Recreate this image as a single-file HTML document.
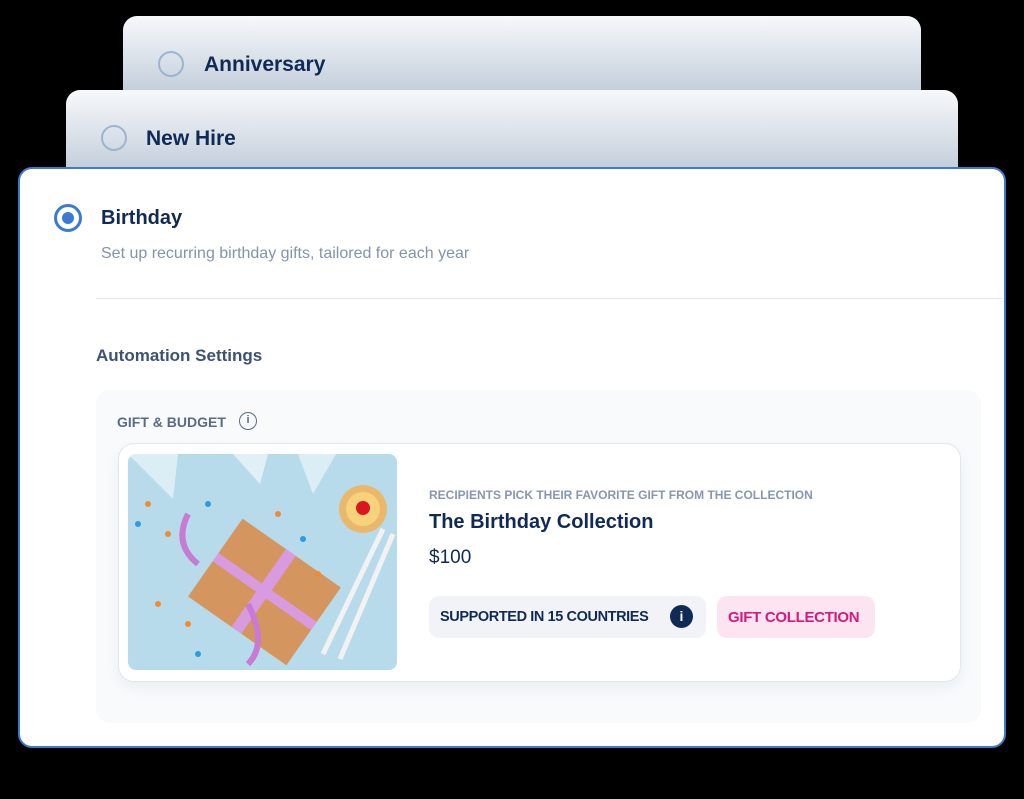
<!DOCTYPE html>
<html><head><meta charset="utf-8"><style>
*{margin:0;padding:0;box-sizing:border-box}
body{width:1024px;height:799px;background:#000;position:relative;overflow:hidden;font-family:"Liberation Sans",sans-serif;color:#0f2a55}
.card{position:absolute;border-radius:14px 14px 0 0;background:linear-gradient(#f7f9fb,#c3cedb)}
.radio{position:absolute;width:26px;height:26px;border-radius:50%;border:2px solid #9db4d1}
.lbl{position:absolute;font-size:21px;font-weight:700;color:#0f2a55}
.abs{position:absolute;white-space:nowrap}
</style></head><body>
<div class="card" style="left:123px;top:16px;width:798px;height:76px"></div>
<div class="radio" style="left:158px;top:51px"></div>
<div class="lbl" style="left:204px;top:53px">Anniversary</div>
<div class="card" style="left:66px;top:90px;width:892px;height:80px"></div>
<div class="radio" style="left:101px;top:125px"></div>
<div class="lbl" style="left:146px;top:127px">New Hire</div>
<div style="position:absolute;left:18px;top:167px;width:988px;height:581px;background:#fff;border:2px solid #3b7ad1;border-radius:14px"></div>
<div style="position:absolute;left:54px;top:204px;width:28px;height:28px;border-radius:50%;border:3px solid #3b7ad1"></div>
<div style="position:absolute;left:62px;top:212px;width:12px;height:12px;border-radius:50%;background:#3b7ad1"></div>
<div class="abs" style="left:101px;top:207px;font-size:20px;font-weight:700">Birthday</div>
<div class="abs" style="left:101px;top:245px;font-size:16px;color:#8393aa">Set up recurring birthday gifts, tailored for each year</div>
<div style="position:absolute;left:96px;top:298px;width:907px;height:1px;background:#e3e8ee"></div>
<div class="abs" style="left:96px;top:346px;font-size:17px;font-weight:700;color:#3d5273">Automation Settings</div>
<div style="position:absolute;left:96px;top:390px;width:885px;height:333px;background:#f8fafc;border-radius:14px"></div>
<div class="abs" style="left:117px;top:414px;font-size:14px;font-weight:700;color:#5a6c85">GIFT &amp; BUDGET</div>
<div style="position:absolute;left:239px;top:412px;width:18px;height:18px;border-radius:50%;border:1.5px solid #5a6c85;font-size:11px;font-weight:700;color:#5a6c85;text-align:center;line-height:15px">i</div>
<div style="position:absolute;left:118px;top:443px;width:843px;height:239px;background:#fff;border:1px solid #e1e7ef;border-radius:16px;box-shadow:0 6px 14px rgba(30,60,100,0.06)"></div>
<div style="position:absolute;left:128px;top:454px;width:269px;height:216px;border-radius:8px;overflow:hidden;background:#b8dbeb">
<svg width="269" height="216">
<polygon points="0,0 50,0 45,45" fill="#dceef5"/><polygon points="105,0 140,0 132,30" fill="#e0f0f6"/><polygon points="170,0 208,0 185,40" fill="#dceef5"/>
<circle cx="235" cy="55" r="24" fill="#e9b86a"/><circle cx="235" cy="55" r="17" fill="#f7d27c"/><circle cx="235" cy="54" r="7" fill="#d8181e"/>
<g transform="rotate(35 135 140)"><rect x="75" y="90" width="120" height="95" fill="#d4955e"/><rect x="128" y="90" width="12" height="95" fill="#d99be0"/><rect x="75" y="132" width="120" height="10" fill="#d99be0"/></g>
<path d="M60 60 Q45 90 70 110 M120 150 Q140 190 120 210" stroke="#c77bd1" stroke-width="6" fill="none"/>
<path d="M195 200 L255 75 M212 205 L265 80" stroke="#f2f2f2" stroke-width="5"/>
<g fill="#f28a2e"><circle cx="20" cy="50" r="3"/><circle cx="40" cy="80" r="3"/><circle cx="150" cy="60" r="3"/><circle cx="190" cy="120" r="3"/><circle cx="30" cy="150" r="3"/><circle cx="60" cy="170" r="3"/></g>
<g fill="#2c9be0"><circle cx="10" cy="70" r="3"/><circle cx="80" cy="50" r="3"/><circle cx="175" cy="85" r="3"/><circle cx="70" cy="200" r="3"/></g>
</svg></div>
<div class="abs" style="left:429px;top:488px;font-size:12px;font-weight:700;color:#8797ad">RECIPIENTS PICK THEIR FAVORITE GIFT FROM THE COLLECTION</div>
<div class="abs" style="left:429px;top:511px;font-size:20px;font-weight:700">The Birthday Collection</div>
<div class="abs" style="left:429px;top:547px;font-size:19px">$100</div>
<div style="position:absolute;left:429px;top:596px;width:277px;height:42px;background:#f1f3f6;border-radius:10px"></div>
<div class="abs" style="left:440px;top:609px;font-size:14.5px;font-weight:700;letter-spacing:-0.4px">SUPPORTED IN 15 COUNTRIES</div>
<div style="position:absolute;left:670px;top:605px;width:23px;height:23px;border-radius:50%;background:#0f2a55;color:#fff;font-size:14px;font-weight:700;text-align:center;line-height:23px">i</div>
<div style="position:absolute;left:717px;top:596px;width:158px;height:42px;background:#fce4f0;border-radius:10px"></div>
<div class="abs" style="left:728px;top:609px;font-size:15px;font-weight:700;color:#d6197c;letter-spacing:-0.3px">GIFT COLLECTION</div>
</body></html>
